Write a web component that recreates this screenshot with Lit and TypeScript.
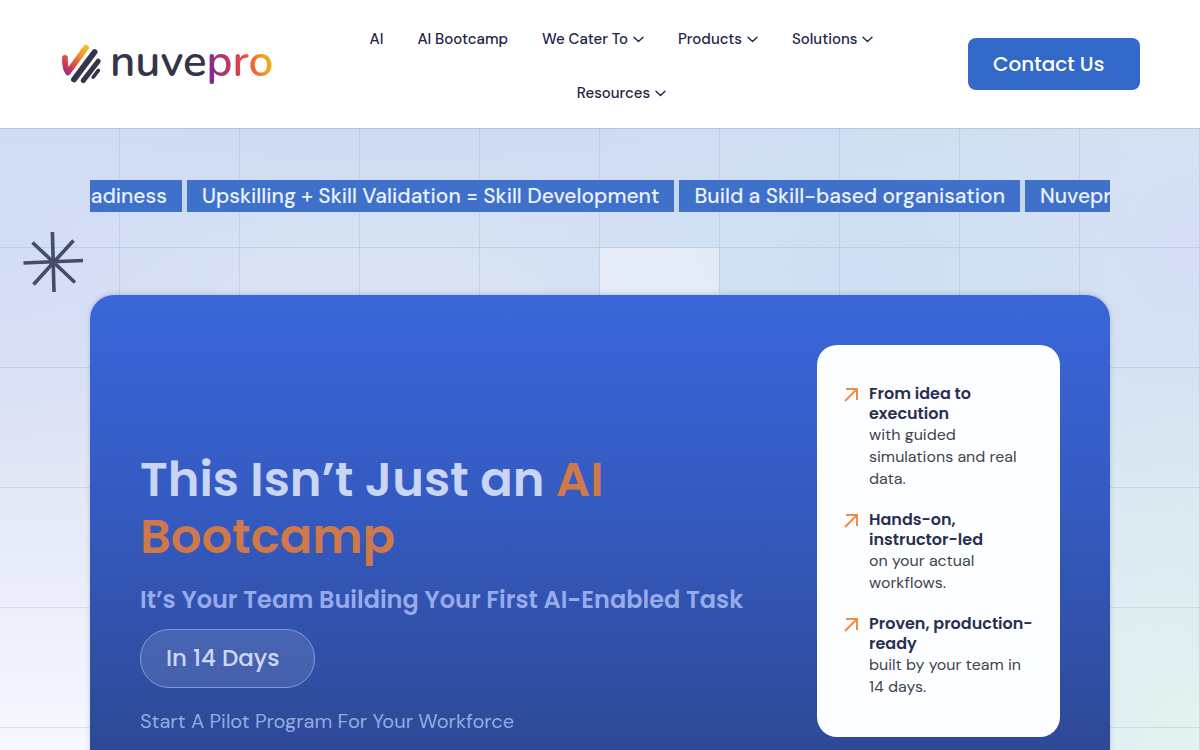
import { LitElement, html, css, nothing } from "lit";
import { customElement } from "lit/decorators.js";

interface NavItem {
  label: string;
  menu?: boolean;
}

const NAV: NavItem[] = [
  { label: "AI" },
  { label: "AI Bootcamp" },
  { label: "We Cater To", menu: true },
  { label: "Products", menu: true },
  { label: "Solutions", menu: true },
  { label: "Resources", menu: true },
];

const BENEFITS = [
  { title: "From idea to execution", text: "with guided simulations and real data." },
  { title: "Hands-on, instructor-led", text: "on your actual workflows." },
  { title: "Proven, production-ready", text: "built by your team in 14 days." },
];

@customElement("site-header")
class SiteHeader extends LitElement {
  static styles = css`
    :host {
      display: block;
      background: #fff;
      font-family: "DM Sans", Inter, sans-serif;
    }
    .bar {
      display: flex;
      align-items: center;
      min-height: 128px;
      padding: 0 60px;
      box-sizing: border-box;
    }
    .logo {
      display: flex;
      align-items: center;
      gap: 8px;
      width: 215px;
      color: #36344a;
      text-decoration: none;
      font: 600 44px/48px Nunito, Lato, sans-serif;
    }
    .mark {
      width: 42px;
      height: 42px;
      flex: none;
    }
    .word {
      padding-bottom: 4px;
    }
    .pro {
      background: linear-gradient(75deg, #7b2b92 8%, #c8365c 36%, #e8503f 58%, #f2a01f 80%, #f0c020);
      -webkit-background-clip: text;
      background-clip: text;
      color: transparent;
    }
    .nav {
      flex: 1;
      display: flex;
      flex-wrap: wrap;
      justify-content: center;
      padding: 4px 50px 0;
    }
    .link {
      display: flex;
      align-items: center;
      gap: 5px;
      padding: 0 17px;
      color: #1d2547;
      font-size: 15px;
      font-weight: 500;
      line-height: 54px;
      text-decoration: none;
    }
    .chevron {
      width: 11px;
      height: 7px;
    }
    .contact {
      width: 172px;
      height: 52px;
      padding: 0 25px;
      border: 0;
      border-radius: 8px;
      background: #3268c8;
      color: #fff;
      text-align: left;
      font: 500 20px/30px Poppins, Inter, sans-serif;
    }
  `;

  render() {
    return html`
      <header class="bar">
        <a class="logo" href="#">
          <svg class="mark" viewBox="0 0 42 42" fill="none" stroke-linecap="round" aria-hidden="true">
            <defs>
              <linearGradient id="tick" x1="4" y1="34" x2="28" y2="6" gradientUnits="userSpaceOnUse">
                <stop offset="0" stop-color="#7b2b92" />
                <stop offset=".35" stop-color="#dc3d4b" />
                <stop offset=".7" stop-color="#f08a2a" />
                <stop offset="1" stop-color="#f2bd22" />
              </linearGradient>
            </defs>
            <path d="M5 15C4.8 21 5.2 26 8 29.4L26 4.8" stroke="url(#tick)" stroke-width="5.8" stroke-linejoin="round" />
            <g stroke="#36344a">
              <path d="M14 36.4L34.6 9" stroke-width="5.8" />
              <path d="M23.2 37.6L38.2 18.2" stroke-width="5" />
              <path d="M33.2 34.2L38.4 27.4" stroke-width="3.6" />
            </g>
          </svg>
          <span class="word">nuve<span class="pro">pro</span></span>
        </a>
        <nav class="nav">
          ${NAV.map(
            (item) => html`<a class="link" href="#"
              >${item.label}${item.menu
                ? html`<svg class="chevron" viewBox="0 0 11 7" fill="none" stroke="#1d2547" stroke-width="1.4" stroke-linecap="round" stroke-linejoin="round" aria-hidden="true"><path d="M1 1.3L5.5 5.4L10 1.3" /></svg>`
                : nothing}</a
            >`
          )}
        </nav>
        <button class="contact" type="button">Contact Us</button>
      </header>
    `;
  }
}

@customElement("topic-ticker")
class TopicTicker extends LitElement {
  static styles = css`
    :host {
      display: flex;
      gap: 5px;
      overflow: hidden;
      background: #c6d7f2;
      color: #eaf2ff;
      font: 500 21px/32px "DM Sans", Inter, sans-serif;
      white-space: nowrap;
    }
    .item {
      flex: none;
      padding: 0 15px;
      background: #3f70ca;
    }
    .leading {
      display: flex;
      justify-content: flex-end;
      width: 62px;
      overflow: hidden;
    }
    .trailing {
      flex: 1 0 0;
      min-width: 0;
      padding-right: 0;
      overflow: hidden;
    }
  `;

  render() {
    return html`
      <span class="item leading">Readiness</span>
      <span class="item">Upskilling + Skill Validation = Skill Development</span>
      <span class="item">Build a Skill-based organisation</span>
      <span class="item trailing">Nuvepro</span>
    `;
  }
}

@customElement("benefit-list")
class BenefitList extends LitElement {
  static styles = css`
    :host {
      display: block;
    }
    .list {
      display: grid;
      gap: 20px;
      margin: 0;
      padding: 39px 26px;
      border-radius: 20px;
      background: #fdfeff;
      list-style: none;
    }
    .entry {
      display: flex;
      gap: 10px;
    }
    .arrow {
      flex: none;
      width: 16px;
      height: 16px;
      margin-top: 2px;
    }
    .title {
      margin: 0;
      color: #28304f;
      font: 600 16px/20px Poppins, Inter, sans-serif;
    }
    .text {
      margin: 0;
      color: #3d4452;
      font: 400 16px/22px "DM Sans", Inter, sans-serif;
    }
  `;

  render() {
    return html`
      <ul class="list">
        ${BENEFITS.map(
          (b) => html`<li class="entry">
            <svg class="arrow" viewBox="0 0 16 16" fill="none" stroke="#f58a42" stroke-width="2" aria-hidden="true">
              <path d="M3 3H14V14M14 3L2 15" />
            </svg>
            <div>
              <h3 class="title">${b.title}</h3>
              <p class="text">${b.text}</p>
            </div>
          </li>`
        )}
      </ul>
    `;
  }
}

@customElement("app-root")
class AppRoot extends LitElement {
  static styles = css`
    :host {
      display: block;
    }
    .hero {
      position: relative;
      padding: 52px 90px 0;
      background:
        linear-gradient(rgba(255, 255, 255, 0.36), rgba(255, 255, 255, 0.36)) 600px 120px / 119px 119px no-repeat,
        linear-gradient(rgba(120, 140, 185, 0.3), rgba(120, 140, 185, 0.3)) 0 0 / 100% 1px no-repeat,
        repeating-linear-gradient(to right, transparent 0 119px, rgba(120, 140, 170, 0.2) 119px 120px),
        repeating-linear-gradient(to bottom, transparent 0 119px, rgba(120, 140, 170, 0.2) 119px 120px),
        radial-gradient(ellipse 300px 360px at 100% 620px, rgba(226, 243, 239, 1), transparent),
        radial-gradient(ellipse 160px 160px at 100% 120px, rgba(213, 221, 246, 0.9), transparent),
        radial-gradient(ellipse 420px 260px at 72% 150px, rgba(205, 222, 243, 0.9), transparent),
        radial-gradient(ellipse 300px 240px at 0 110px, rgba(210, 219, 246, 0.9), transparent),
        linear-gradient(to right, transparent 50%, rgba(214, 228, 242, 0.9) 100%),
        linear-gradient(#cfdaf2 0, #d8e3f3 130px, #e2e6f6 340px, #f6f8ff 622px);
    }
    .spark {
      position: absolute;
      left: 22px;
      top: 104px;
      width: 62px;
      height: 62px;
    }
    .panel {
      display: flex;
      align-items: flex-start;
      gap: 40px;
      margin-top: 83px;
      padding: 50px;
      border-radius: 24px 24px 0 0;
      background: linear-gradient(#3a66da, #345abf 45%, #2d4690);
      box-shadow: 0 -1px 5px rgba(60, 90, 140, 0.25);
    }
    .pitch {
      flex: 1;
      padding-top: 106px;
      font-family: Poppins, Inter, sans-serif;
    }
    .headline {
      margin: 0;
      color: #c9d5f2;
      font-size: 48px;
      font-weight: 600;
      line-height: 57px;
    }
    .accent {
      color: #cf794b;
    }
    .sub {
      margin: 18px 0 12px;
      color: #97abec;
      font-size: 24px;
      font-weight: 600;
      line-height: 34px;
    }
    .badge {
      display: inline-block;
      padding: 0 35px 0 25px;
      border: 1px solid #8299dc;
      border-radius: 29px;
      background: rgba(255, 255, 255, 0.11);
      color: #ccd8f6;
      font-size: 23px;
      font-weight: 500;
      line-height: 57px;
    }
    .note {
      margin: 18px 0 0;
      color: #96a9e2;
      font: 400 20px/30px "DM Sans", Inter, sans-serif;
    }
    .benefits {
      flex: none;
      width: 243px;
    }
  `;

  render() {
    return html`
      <site-header></site-header>
      <main class="hero">
        <topic-ticker></topic-ticker>
        <svg class="spark" viewBox="0 0 62 62" fill="none" stroke="#434d6b" stroke-width="3.6" aria-hidden="true">
          <path d="M30.4 0L32 60M1.5 31L61 28.5M10.5 10.5L53 50.5M51.5 8.5L11.5 52.5" />
        </svg>
        <section class="panel">
          <div class="pitch">
            <h1 class="headline">This Isn’t Just an <span class="accent">AI Bootcamp</span></h1>
            <h2 class="sub">It’s Your Team Building Your First AI-Enabled Task</h2>
            <span class="badge">In 14 Days</span>
            <p class="note">Start A Pilot Program For Your Workforce</p>
          </div>
          <benefit-list class="benefits"></benefit-list>
        </section>
      </main>
    `;
  }
}
